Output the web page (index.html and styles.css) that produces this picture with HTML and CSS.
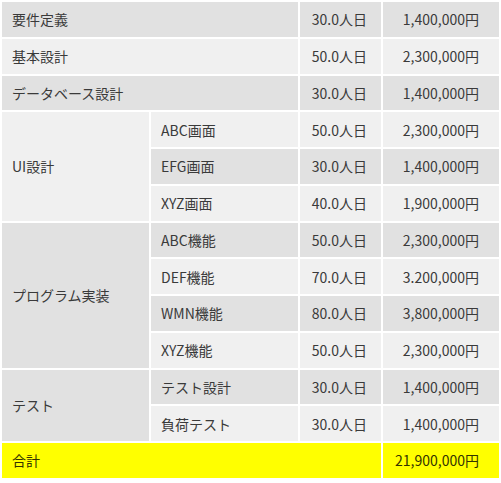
FILE: index.html
```html
<!DOCTYPE html>
<html lang="ja">
<head>
<meta charset="utf-8">
<link rel="stylesheet" href="styles.css">
</head>
<body>
<table class="estimate">
  <colgroup>
    <col class="c1"><col class="c2"><col class="c3"><col class="c4">
  </colgroup>
  <tbody>
    <tr><td colspan="2">要件定義</td><td class="days">30.0人日</td><td class="price">1,400,000円</td></tr>
    <tr><td colspan="2">基本設計</td><td class="days">50.0人日</td><td class="price">2,300,000円</td></tr>
    <tr><td colspan="2">データベース設計</td><td class="days">30.0人日</td><td class="price">1,400,000円</td></tr>
    <tr><td rowspan="3" class="group">UI設計</td><td>ABC画面</td><td class="days">50.0人日</td><td class="price">2,300,000円</td></tr>
    <tr><td>EFG画面</td><td class="days">30.0人日</td><td class="price">1,400,000円</td></tr>
    <tr><td>XYZ画面</td><td class="days">40.0人日</td><td class="price">1,900,000円</td></tr>
    <tr><td rowspan="4" class="group">プログラム実装</td><td>ABC機能</td><td class="days">50.0人日</td><td class="price">2,300,000円</td></tr>
    <tr><td>DEF機能</td><td class="days">70.0人日</td><td class="price">3.200,000円</td></tr>
    <tr><td>WMN機能</td><td class="days">80.0人日</td><td class="price">3,800,000円</td></tr>
    <tr><td>XYZ機能</td><td class="days">50.0人日</td><td class="price">2,300,000円</td></tr>
    <tr><td rowspan="2" class="group">テスト</td><td>テスト設計</td><td class="days">30.0人日</td><td class="price">1,400,000円</td></tr>
    <tr><td>負荷テスト</td><td class="days">30.0人日</td><td class="price">1,400,000円</td></tr>
    <tr class="total"><td colspan="3">合計</td><td class="price">21,900,000円</td></tr>
  </tbody>
</table>
</body>
</html>
```
FILE: styles.css
```css
html, body {
  margin: 0;
  padding: 0;
  background: #ffffff;
}
body {
  font-family: "Noto Sans CJK JP", "Noto Sans", sans-serif;
  font-size: 14px;
  color: #3a3a3a;
}
.estimate {
  width: 501px;
  table-layout: fixed;
  border-collapse: separate;
  border-spacing: 2px;
}
.c1 { width: 147px; }
.c2 { width: 147px; }
.c3 { width: 81px; }
.c4 { width: 116px; }
.estimate td {
  height: 34.75px;
  padding: 0 10px;
  line-height: 20px;
  vertical-align: middle;
  white-space: nowrap;
  background: #f0f0f0;
}
.estimate tr:nth-child(odd) td {
  background: #e1e1e1;
}
.estimate td.days {
  text-align: right;
  padding-right: 14px;
}
.estimate td.price {
  text-align: right;
  padding-right: 20px;
}
.estimate tr.total td {
  background: #ffff00;
  color: #333300;
}
```
